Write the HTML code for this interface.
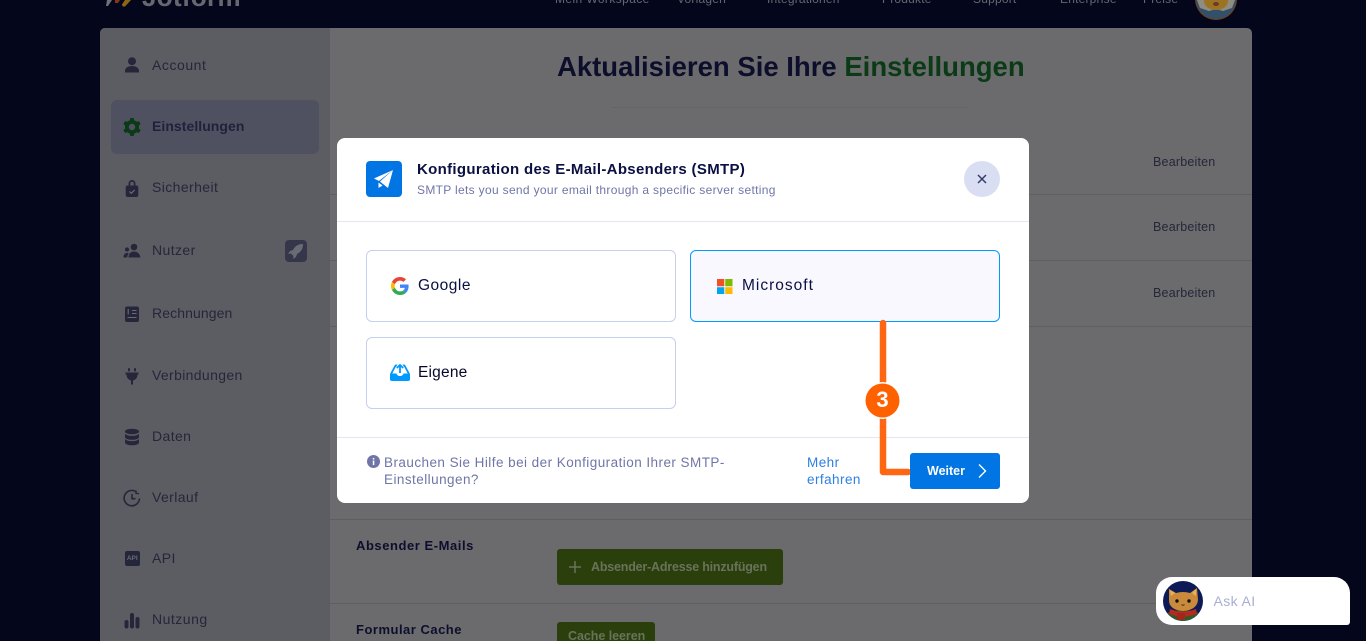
<!DOCTYPE html>
<html lang="de"><head><meta charset="utf-8"><title>Jotform</title>
<style>
html,body{margin:0;padding:0;width:1366px;height:641px;overflow:hidden;background:#04061c;font-family:"Liberation Sans",sans-serif}
#w{position:relative;width:1366px;height:641px;overflow:hidden;background:#04061c}
.a{position:absolute}
.t{position:absolute;white-space:nowrap;line-height:20px;height:20px}
.s{color:#25263a;font-size:14px;left:152px;letter-spacing:.4px}
.nav{color:#66676f;font-size:12px;top:-11px;letter-spacing:.2px}
.line{position:absolute;left:330px;width:922px;height:1px;background:#5f5f62}
.bb{color:#25263a;font-size:12.500px;left:1153px;letter-spacing:.2px}
.card{position:absolute;box-sizing:border-box;width:310px;height:72px;border:1px solid #c8ceed;border-radius:6px;background:#fff}
.cl{color:#0a1042;font-size:15.500px;letter-spacing:.2px}
.ic{position:absolute;left:123px;width:18px;height:18px}
.f{font-size:13.500px;letter-spacing:.45px}
</style></head><body><div id="w">

<!-- top nav -->
<div class="t" style="left:142px;top:-13px;font-size:26px;font-weight:700;color:#66676f;letter-spacing:.3px">Jotform</div>
<svg class="a" style="left:105px;top:0" width="28" height="8" viewBox="0 0 28 8"><path d="M2 0h5L3 6H1z" fill="#70717a"/><path d="M10 0h5l-2 3h-3z" fill="#8a3515"/><path d="M20 0h6l-6 6.500q-3 .5-3-2z" fill="#8f6415"/></svg>
<div class="t nav" style="left:555px;letter-spacing:.4px">Mein Workspace</div>
<div class="t nav" style="left:677px">Vorlagen</div>
<div class="t nav" style="left:767px">Integrationen</div>
<div class="t nav" style="left:882px">Produkte</div>
<div class="t nav" style="left:973px">Support</div>
<div class="t nav" style="left:1060px">Enterprise</div>
<div class="t nav" style="left:1143px">Preise</div>
<svg class="a" style="left:1194px;top:0" width="44" height="21" viewBox="0 0 44 21"><circle cx="22" cy="-1" r="21" fill="#7a3f16"/><circle cx="22" cy="-1" r="20" fill="#32506a"/><path d="M3 0h38l-3 8-9 3-7-2-7 2-9-3z" fill="#8f8c82"/><ellipse cx="22" cy="1" rx="12" ry="9" fill="#9a7420"/><ellipse cx="22" cy="4" rx="3" ry="2" fill="#7a3030"/></svg>

<!-- page card -->
<div class="a" style="left:100px;top:28px;width:1152px;height:613px;background:#6b6b6d;border-radius:5px 5px 0 0"></div>
<div class="a" style="left:100px;top:28px;width:230px;height:613px;background:#5c5d62;border-radius:5px 0 0 0"></div>
<div class="a" style="left:111px;top:100px;width:208px;height:54px;background:#505160;border-radius:6px"></div>

<!-- sidebar -->
<svg class="ic" style="top:56px" viewBox="0 0 18 18" fill="#25263a"><circle cx="9" cy="5.200" r="4"/><path d="M2 16.500v-1.500c0-3 3-5 7-5s7 2 7 5v1.500z"/></svg>
<div class="t s" style="top:55px;letter-spacing:.55px">Account</div>

<svg class="ic" style="top:118px" viewBox="0 0 18 18"><g fill="#0a3a16"><rect x="7" y="0" width="4" height="18" rx="1"/><rect x="7" y="0" width="4" height="18" rx="1" transform="rotate(60 9 9)"/><rect x="7" y="0" width="4" height="18" rx="1" transform="rotate(120 9 9)"/><circle cx="9" cy="9" r="7"/></g><circle cx="9" cy="9" r="3.200" fill="#505160"/></svg>
<div class="t s" style="top:116px;font-weight:700;letter-spacing:.05px;color:#20213a">Einstellungen</div>

<svg class="ic" style="top:179px" viewBox="0 0 18 18" fill="#25263a"><path d="M5.500 7V4.500a3.500 3.500 0 0 1 7 0V7h-1.800V4.500a1.700 1.700 0 0 0-3.400 0V7z"/><rect x="2.700" y="6.500" width="12.600" height="11.500" rx="2"/><path d="M6.500 12.500l1.800 1.800 3.300-3.300" stroke="#6a6c75" stroke-width="1.200" fill="none"/></svg>
<div class="t s" style="top:177px">Sicherheit</div>

<svg class="ic" style="top:242px" viewBox="0 0 18 18" fill="#25263a"><circle cx="11" cy="5" r="3.300"/><path d="M5.500 15.500c0-3.500 2-6 5.500-6s6 2.500 6.500 6z"/><circle cx="4" cy="7.500" r="2.100"/><path d="M.5 15.500c0-2.500 1-4.500 3.500-4.500 1 0 1.500.3 1.800.6-1 1-1.500 2.300-1.600 3.900z"/></svg>
<div class="t s" style="top:240px">Nutzer</div>
<svg class="a" style="left:285px;top:240px" width="22" height="22" viewBox="0 0 22 22"><rect width="22" height="22" rx="4" fill="#35364a"/><path d="M18 4c-5 0-8 2-10 6l-3 1-2 3 3-.5 2.500 2.500-.5 3 3-2 1-3c4-2 6-5 6-10z" fill="#6a6c75"/></svg>

<svg class="ic" style="top:305px" viewBox="0 0 18 18"><rect x="2" y="1.500" width="14" height="15.500" rx="2" fill="#25263a"/><path d="M9 5.500h4.500M9 8.500h4.500M4.500 12.500h9M5.200 4v5.500" stroke="#6a6c75" stroke-width="1.100"/></svg>
<div class="t s" style="top:303px;letter-spacing:.1px">Rechnungen</div>

<svg class="ic" style="top:367px" viewBox="0 0 18 18" fill="#25263a"><rect x="5" y="1" width="2" height="3.500" rx="1"/><rect x="11" y="1" width="2" height="3.500" rx="1"/><path d="M2.500 5.500h13v2h-1c0 3.500-2.200 5.500-4.500 6v3.500l-1 1-1-1v-3.500C5.700 13 3.500 11 3.500 7.500h-1z"/></svg>
<div class="t s" style="top:365px;letter-spacing:.35px">Verbindungen</div>

<svg class="ic" style="top:428px" viewBox="0 0 18 18" fill="#25263a"><ellipse cx="9" cy="3.500" rx="7" ry="2.800"/><path d="M2 5.800c1.200 1.500 4 2.100 7 2.100s5.800-.6 7-2.100v3.200c0 1.600-3 2.800-7 2.800s-7-1.200-7-2.800z"/><path d="M2 11c1.200 1.500 4 2.100 7 2.100s5.800-.6 7-2.100v3.500c0 1.600-3 2.800-7 2.800s-7-1.200-7-2.800z"/></svg>
<div class="t s" style="top:426px">Daten</div>

<svg class="ic" style="top:489px" viewBox="0 0 18 18" fill="none" stroke="#25263a" stroke-width="1.600"><path d="M16.500 9.500a7.700 7.700 0 1 1-3-6.500"/><path d="M9 5v4.700h3.500"/><path d="M13 1.500v3h3" stroke-width="1.300"/></svg>
<div class="t s" style="top:487px">Verlauf</div>

<div class="a" style="left:125px;top:551px;width:14.500px;height:15px;background:#25263a;border-radius:2px;color:#6a6c75;font-size:6.500px;font-weight:700;line-height:15px;text-align:center">API</div>
<div class="t s" style="top:548px">API</div>

<svg class="ic" style="top:611px" viewBox="0 0 18 18" fill="#25263a"><rect x="1.500" y="9" width="4" height="8.500" rx="2"/><rect x="7" y="2" width="4" height="15.500" rx="2"/><rect x="12.500" y="6" width="4" height="11.500" rx="2"/></svg>
<div class="t s" style="top:609px;letter-spacing:.5px">Nutzung</div>

<!-- main -->
<div class="t" style="left:557px;top:50px;height:34px;line-height:34px;font-size:27.500px;font-weight:700;color:#0d0e2c;letter-spacing:0">Aktualisieren Sie Ihre <span style="color:#0a3a16">Einstellungen</span></div>
<div class="a" style="left:612px;top:107px;width:356px;height:1px;background:#646467"></div>
<div class="line" style="top:194px"></div>
<div class="line" style="top:260px"></div>
<div class="line" style="top:326px"></div>
<div class="line" style="top:519px"></div>
<div class="line" style="top:603px"></div>
<div class="t bb" style="top:152px">Bearbeiten</div>
<div class="t bb" style="top:217px">Bearbeiten</div>
<div class="t bb" style="top:283px">Bearbeiten</div>

<div class="t" style="left:356px;top:536px;font-size:13px;font-weight:700;color:#0d0e2c;letter-spacing:.55px">Absender E-Mails</div>
<div class="a" style="left:557px;top:549px;width:226px;height:36px;background:#2a3f0c;border-radius:3px"></div>
<svg class="a" style="left:568px;top:560px" width="14" height="14" viewBox="0 0 14 14"><path d="M7 1v12M1 7h12" stroke="#69735a" stroke-width="1.500"/></svg>
<div class="t" style="left:591px;top:557px;font-size:12.500px;font-weight:700;color:#69735a;letter-spacing:-.2px">Absender-Adresse hinzufügen</div>
<div class="t" style="left:356px;top:620px;font-size:13px;font-weight:700;color:#0d0e2c;letter-spacing:.5px">Formular Cache</div>
<div class="a" style="left:557px;top:622px;width:98px;height:36px;background:#2a3f0c;border-radius:3px"></div>
<div class="t" style="left:568px;top:626px;font-size:12.500px;font-weight:700;color:#69735a;letter-spacing:-.05px">Cache leeren</div>

<!-- modal -->
<div class="a" style="left:337px;top:138px;width:692px;height:365px;background:#fff;border-radius:8px"></div>
<div class="a" style="left:337px;top:221px;width:692px;height:1px;background:#e3e5f1"></div>
<div class="a" style="left:337px;top:437px;width:692px;height:1px;background:#e3e5f1"></div>
<div class="a" style="left:366px;top:161px;width:36px;height:36px;background:#0075e3;border-radius:4px"></div>
<svg class="a" style="left:373px;top:169px" width="21" height="21" viewBox="0 0 21 21"><path d="M20 1L1 9.500l5 2.500z" fill="#fff"/><path d="M20 1L7 12.500 15 19z" fill="#fff"/><path d="M5.500 13.500l4 3L5.500 19z" fill="#fff"/></svg>
<div class="t" style="left:417px;top:160px;font-size:15px;font-weight:700;color:#0a1042;letter-spacing:.32px">Konfiguration des E-Mail-Absenders (SMTP)</div>
<div class="t" style="left:417px;top:180px;font-size:12px;color:#6f76a7;letter-spacing:.32px">SMTP lets you send your email through a specific server setting</div>
<div class="a" style="left:964px;top:161px;width:36px;height:36px;background:#dadef3;border-radius:50%"></div>
<svg class="a" style="left:976px;top:173px" width="12" height="12" viewBox="0 0 12 12"><path d="M2 2l8 8M10 2l-8 8" stroke="#343e66" stroke-width="1.500"/></svg>

<div class="card" style="left:366px;top:250px"></div>
<svg class="a" style="left:391px;top:277px" width="18" height="18" viewBox="0 0 48 48"><path fill="#EA4335" d="M24 9.500c3.540 0 6.710 1.220 9.210 3.600l6.850-6.850C35.900 2.380 30.470 0 24 0 14.620 0 6.510 5.380 2.560 13.220l7.980 6.190C12.430 13.720 17.740 9.500 24 9.500z"/><path fill="#4285F4" d="M46.980 24.550c0-1.570-.15-3.090-.38-4.550H24v9.020h12.940c-.58 2.960-2.260 5.480-4.780 7.180l7.730 6c4.510-4.180 7.090-10.360 7.090-17.650z"/><path fill="#FBBC05" d="M10.530 28.590c-.48-1.450-.76-2.990-.76-4.590s.27-3.140.76-4.590l-7.980-6.190C.92 16.460 0 20.120 0 24c0 3.880.92 7.540 2.560 10.780l7.970-6.190z"/><path fill="#34A853" d="M24 48c6.480 0 11.930-2.130 15.890-5.810l-7.730-6c-2.150 1.450-4.920 2.300-8.160 2.300-6.260 0-11.570-4.220-13.470-9.910l-7.980 6.190C6.510 42.620 14.620 48 24 48z"/></svg>
<div class="t cl" style="left:418px;top:276px;letter-spacing:.5px">Google</div>

<div class="card" style="left:690px;top:250px;border-color:#0099ff;background:#f9f8ff"></div>
<svg class="a" style="left:717px;top:278.500px" width="15.500" height="15.500" viewBox="0 0 16 16"><rect width="7.500" height="7.500" fill="#f25022"/><rect x="8.500" width="7.500" height="7.500" fill="#7fba00"/><rect y="8.500" width="7.500" height="7.500" fill="#00a4ef"/><rect x="8.500" y="8.500" width="7.500" height="7.500" fill="#ffb900"/></svg>
<div class="t cl" style="left:742px;top:276px;letter-spacing:1px">Microsoft</div>

<div class="card" style="left:366px;top:337px"></div>
<svg class="a" style="left:390px;top:364px" width="20" height="17" viewBox="0 0 20 17"><path d="M4.500 1.500Q5 .5 6 .5h1.500L6 3H5.700L2.300 9.500H6.500c.3 1.500 1.700 2.500 3.500 2.500s3.200-1 3.500-2.500h4.200L14.300 3H14L12.500.5H14q1 0 1.500 1L20 10v5q0 2-2 2H2q-2 0-2-2v-5z" fill="#0099ff"/><path d="M10 1v8M6.800 4L10 1l3.200 3" stroke="#0099ff" stroke-width="1.800" fill="none"/></svg>
<div class="t cl" style="left:418px;top:363px;color:#05082a">Eigene</div>

<!-- footer -->
<svg class="a" style="left:366.500px;top:454.500px" width="13" height="13" viewBox="0 0 13 13"><circle cx="6.500" cy="6.500" r="6.500" fill="#6f76a7"/><rect x="5.800" y="5.500" width="1.500" height="4.500" fill="#fff"/><rect x="5.800" y="3" width="1.500" height="1.500" fill="#fff"/></svg>
<div class="t f" style="left:384px;top:453px;color:#6f76a7">Brauchen Sie Hilfe bei der Konfiguration Ihrer SMTP-</div>
<div class="t f" style="left:384px;top:470px;color:#6f76a7">Einstellungen?</div>
<div class="t f" style="left:807px;top:453px;color:#2e80e2">Mehr</div>
<div class="t f" style="left:807px;top:470px;color:#2e80e2">erfahren</div>

<!-- annotation -->
<svg class="a" style="left:860px;top:315px" width="60" height="170" viewBox="0 0 60 170"><path d="M23 8V157H48" stroke="#ff6612" stroke-width="6.500" stroke-linecap="round" stroke-linejoin="round" fill="none"/><circle cx="22.500" cy="85.500" r="18.500" fill="#fff"/><circle cx="22.500" cy="85.500" r="17" fill="#ff6100"/></svg>
<div class="a" style="left:862px;top:385px;width:41px;height:30px;line-height:30px;text-align:center;color:#fff;font-weight:700;font-size:22px">3</div>

<div class="a" style="left:910px;top:453px;width:90px;height:36px;background:#0075e3;border-radius:3px"></div>
<div class="t" style="left:927px;top:461px;font-size:12.500px;font-weight:700;color:#fff">Weiter</div>
<svg class="a" style="left:977px;top:463px" width="10" height="16" viewBox="0 0 10 16"><path d="M2 1.500L8.500 8 2 14.500" stroke="#fff" stroke-width="1.400" fill="none"/></svg>

<!-- Ask AI -->
<div class="a" style="left:1156px;top:577px;width:194px;height:48px;background:#fff;border-radius:16px 16px 3px 16px"></div>
<svg class="a" style="left:1163px;top:581px" width="40" height="40" viewBox="0 0 40 40"><defs><clipPath id="c"><circle cx="20" cy="20" r="20"/></clipPath></defs><g clip-path="url(#c)"><rect width="40" height="40" fill="#0e1a55"/><path d="M4 32q16-6 32 0v8H4z" fill="#2f5a2a"/><path d="M6 8l7 4q7-2 14 0l7-5 1 12q-1 10-15 11Q6 29 6 19z" fill="#c98b3b"/><path d="M7 9l5 3-4 3zM33 8l-4 4 4 3z" fill="#e8b25a"/><path d="M7 28q13 5 26 0l1 5q-14 5-28 0z" fill="#b22a20"/><path d="M14 32h8v7h-8z" fill="#a3261d"/><circle cx="14" cy="20" r="1.700" fill="#111"/><circle cx="26" cy="20" r="1.700" fill="#111"/><path d="M18.500 23.500q1.500 1.500 3 0" stroke="#5a2f14" fill="none"/></g></svg>
<div class="t" style="left:1213.500px;top:591px;font-size:14px;color:#a9aed3;letter-spacing:.4px">Ask AI</div>
</div></body></html>
